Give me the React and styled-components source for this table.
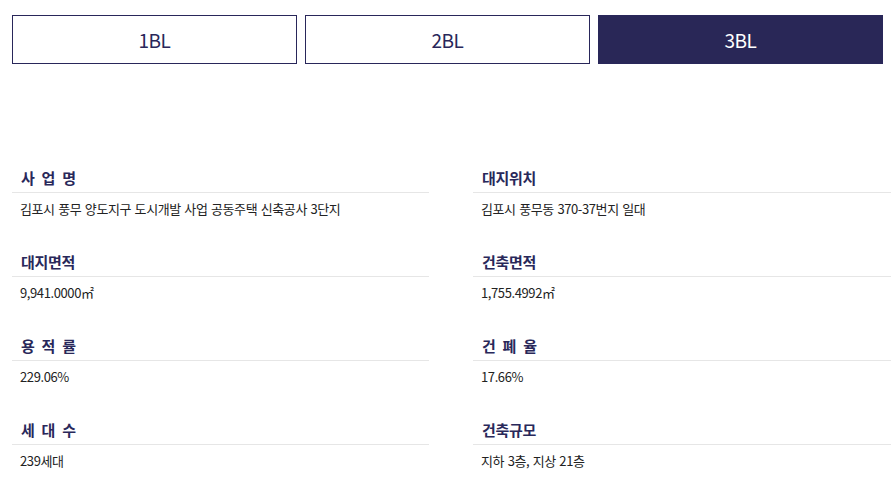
import React, { useState } from 'react';
import styled, { createGlobalStyle } from 'styled-components';

const GlobalStyle = createGlobalStyle`
  body {
    margin: 0;
    background: #fff;
    font-family: 'Noto Sans CJK KR', 'Noto Sans', sans-serif;
  }
`;

const Page = styled.div`
  padding: 15px 3px 0 12px;
`;

const Tabs = styled.div`
  display: flex;
  gap: 8px;
  width: 871px;
`;

const Tab = styled.button`
  flex: 1;
  height: 49px;
  border: 1px solid #29275a;
  background: ${props => (props.active ? '#292757' : '#fff')};
  color: ${props => (props.active ? '#fff' : '#29275a')};
  font-family: 'Noto Sans CJK KR', 'Noto Sans', sans-serif;
  font-size: 19px;
  letter-spacing: -0.5px;
  cursor: pointer;
  padding: 0;
`;

const InfoGrid = styled.dl`
  display: grid;
  grid-template-columns: 417px 418px;
  column-gap: 44px;
  margin: 103px 0 0;
`;

const Item = styled.div`
  margin-bottom: 32px;
`;

const Label = styled.dt`
  font-size: 15px;
  font-weight: 700;
  line-height: 21px;
  color: #29285a;
  letter-spacing: -0.3px;
  word-spacing: 4px;
  padding: 0 0 4px 9px;
  border-bottom: 1px solid #e6e6e6;
`;

const Value = styled.dd`
  margin: 6px 0 0;
  padding-left: 8px;
  font-size: 13px;
  line-height: 20px;
  color: #222;
  letter-spacing: -0.4px;
  word-spacing: 1px;
`;

const info = [
  ['사 업 명', '김포시 풍무 양도지구 도시개발 사업 공동주택 신축공사 3단지'],
  ['대지위치', '김포시 풍무동 370-37번지 일대'],
  ['대지면적', '9,941.0000㎡'],
  ['건축면적', '1,755.4992㎡'],
  ['용 적 률', '229.06%'],
  ['건 폐 율', '17.66%'],
  ['세 대 수', '239세대'],
  ['건축규모', '지하 3층, 지상 21층'],
];

export default function App() {
  const [tab, setTab] = useState('3BL');

  return (
    <Page>
      <GlobalStyle />
      <Tabs>
        {['1BL', '2BL', '3BL'].map(name => (
          <Tab key={name} active={tab === name} onClick={() => setTab(name)}>
            {name}
          </Tab>
        ))}
      </Tabs>
      <InfoGrid>
        {info.map(([label, value]) => (
          <Item key={label}>
            <Label>{label}</Label>
            <Value>{value}</Value>
          </Item>
        ))}
      </InfoGrid>
    </Page>
  );
}
